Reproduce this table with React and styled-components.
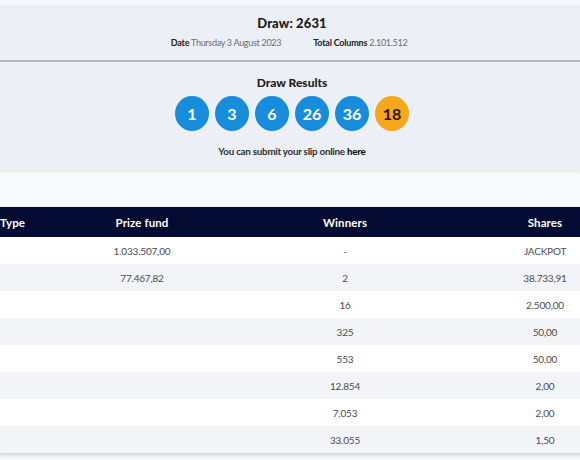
import React from "react";
import styled, { createGlobalStyle } from "styled-components";

const GlobalStyle = createGlobalStyle`
  html, body {
    margin: 0;
    padding: 0;
    background: #f8f9fb;
    overflow: hidden;
  }
  body {
    font-family: "Lato", "Noto Sans", sans-serif;
    color: #222;
  }
`;

const Page = styled.div`
  width: 580px;
  height: 460px;
  padding-top: 5px;
  box-sizing: border-box;
  overflow: hidden;
`;

const InfoCard = styled.section`
  background: #eceff5;
  box-shadow: 0 2px 3px rgba(0, 0, 0, 0.08);
  padding-left: 4px;
`;

const DrawHeader = styled.div`
  display: flex;
  flex-direction: column;
  align-items: center;
  padding: 10px 0 10px;
  gap: 5px;
`;

const Title = styled.h1`
  margin: 0;
  font-size: 13px;
  line-height: 16px;
  font-weight: 900;
  color: #1c1c22;
  letter-spacing: 0.1px;
`;

const Meta = styled.div`
  display: flex;
  gap: 32px;
  font-size: 9px;
  line-height: 14px;
  margin-left: -6px;
`;

const MetaItem = styled.span`
  color: #6a6d75;
  font-weight: 400;
  letter-spacing: -0.3px;
  b {
    color: #22232a;
    font-weight: 700;
    letter-spacing: -0.2px;
  }
`;

const Divider = styled.hr`
  margin: 0 0 0 -4px;
  border: 0;
  height: 2px;
  background: #b7bac2;
`;

const Results = styled.div`
  display: flex;
  flex-direction: column;
  align-items: center;
  padding: 13px 0 12px;
`;

const SectionTitle = styled.h2`
  margin: 0;
  font-size: 12px;
  line-height: 16px;
  font-weight: 900;
  color: #1c1c22;
`;

const Balls = styled.div`
  display: flex;
  gap: 6px;
  margin-top: 5px;
`;

const Ball = styled.span`
  width: 34px;
  height: 35px;
  border-radius: 50%;
  display: flex;
  align-items: center;
  justify-content: center;
  font-size: 16px;
  font-weight: 700;
  background: ${(p) => (p.$bonus ? "#f6a71c" : "#178ddc")};
  color: ${(p) => (p.$bonus ? "#2a1706" : "#ffffff")};
`;

const Note = styled.p`
  margin: 13px 0 0;
  font-size: 9.8px;
  line-height: 14px;
  font-weight: 700;
  color: #2e2f36;
  letter-spacing: -0.25px;
  b {
    font-weight: 900;
    color: #15161b;
  }
`;

const Table = styled.div`
  margin-top: 37px;
  margin-left: -4px;
  width: 640px;
  box-shadow: 0 -1px 0 #eceef2, 0 2px 4px rgba(0, 0, 0, 0.18);
`;

const Row = styled.div`
  display: grid;
  grid-template-columns: 52px 188px 218px 182px;
  align-items: center;
  height: ${(p) => (p.$head ? "30px" : "27px")};
  background: ${(p) =>
    p.$head ? "#030b33" : p.$alt ? "#f3f4f7" : "#ffffff"};
  color: ${(p) => (p.$head ? "#ffffff" : "#4a4c53")};
  font-size: ${(p) => (p.$head ? "11.5px" : "10px")};
  font-weight: ${(p) => (p.$head ? 700 : 400)};
`;

const Cell = styled.span`
  text-align: ${(p) => (p.$left ? "left" : "center")};
  padding-left: ${(p) => (p.$left ? "4px" : "0")};
  letter-spacing: ${(p) => (p.$head ? "0.1px" : "-0.2px")};
`;

const rows = [
  ["", "1.033.507,00", "-", "JACKPOT"],
  ["", "77.467,82", "2", "38.733,91"],
  ["", "", "16", "2.500,00"],
  ["", "", "325", "50,00"],
  ["", "", "553", "50,00"],
  ["", "", "12.854", "2,00"],
  ["", "", "7.053", "2,00"],
  ["", "", "33.055", "1,50"],
];

const numbers = [1, 3, 6, 26, 36];

export default function App() {
  return (
    <>
      <GlobalStyle />
      <Page>
        <InfoCard>
          <DrawHeader>
            <Title>Draw: 2631</Title>
            <Meta>
              <MetaItem>
                <b>Date</b> Thursday 3 August 2023
              </MetaItem>
              <MetaItem>
                <b>Total Columns</b> 2.101.512
              </MetaItem>
            </Meta>
          </DrawHeader>
          <Divider />
          <Results>
            <SectionTitle>Draw Results</SectionTitle>
            <Balls>
              {numbers.map((n) => (
                <Ball key={n}>{n}</Ball>
              ))}
              <Ball $bonus>18</Ball>
            </Balls>
            <Note>
              You can submit your slip online <b>here</b>
            </Note>
          </Results>
        </InfoCard>
        <Table>
          <Row $head>
            <Cell $left $head>Type</Cell>
            <Cell $head>Prize fund</Cell>
            <Cell $head>Winners</Cell>
            <Cell $head>Shares</Cell>
          </Row>
          {rows.map((r, i) => (
            <Row key={i} $alt={i % 2 === 1}>
              <Cell $left>{r[0]}</Cell>
              <Cell>{r[1]}</Cell>
              <Cell>{r[2]}</Cell>
              <Cell>{r[3]}</Cell>
            </Row>
          ))}
        </Table>
      </Page>
    </>
  );
}
